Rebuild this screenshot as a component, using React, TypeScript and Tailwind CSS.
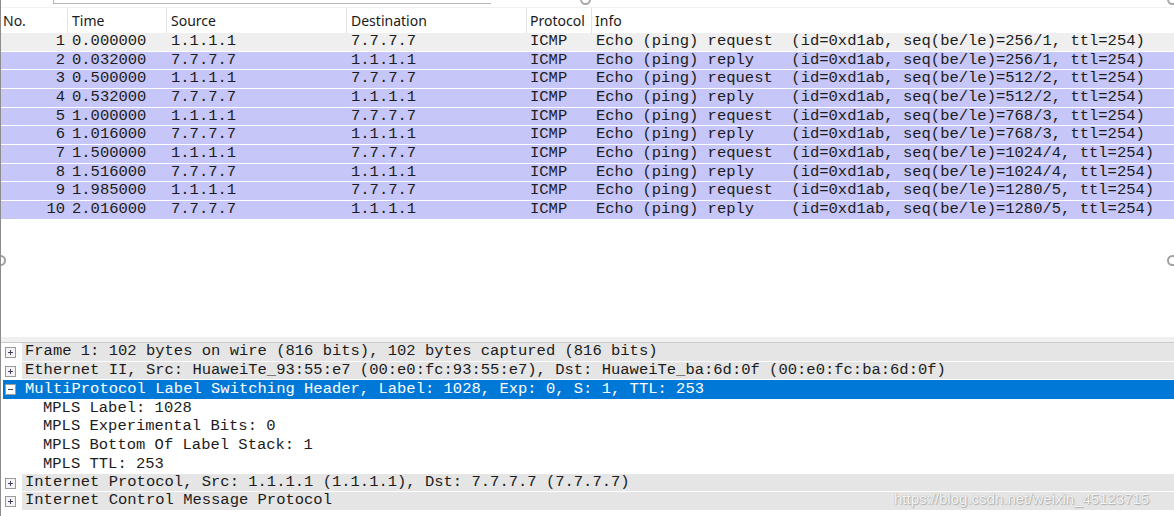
import React from "react";

const mono = { fontFamily: '"Liberation Mono", "DejaVu Sans Mono", monospace' };

type Pkt = [string, string, string, string, string, string];
const rows: Pkt[] = [
  ["1", "0.000000", "1.1.1.1", "7.7.7.7", "ICMP", "Echo (ping) request  (id=0xd1ab, seq(be/le)=256/1, ttl=254)"],
  ["2", "0.032000", "7.7.7.7", "1.1.1.1", "ICMP", "Echo (ping) reply    (id=0xd1ab, seq(be/le)=256/1, ttl=254)"],
  ["3", "0.500000", "1.1.1.1", "7.7.7.7", "ICMP", "Echo (ping) request  (id=0xd1ab, seq(be/le)=512/2, ttl=254)"],
  ["4", "0.532000", "7.7.7.7", "1.1.1.1", "ICMP", "Echo (ping) reply    (id=0xd1ab, seq(be/le)=512/2, ttl=254)"],
  ["5", "1.000000", "1.1.1.1", "7.7.7.7", "ICMP", "Echo (ping) request  (id=0xd1ab, seq(be/le)=768/3, ttl=254)"],
  ["6", "1.016000", "7.7.7.7", "1.1.1.1", "ICMP", "Echo (ping) reply    (id=0xd1ab, seq(be/le)=768/3, ttl=254)"],
  ["7", "1.500000", "1.1.1.1", "7.7.7.7", "ICMP", "Echo (ping) request  (id=0xd1ab, seq(be/le)=1024/4, ttl=254)"],
  ["8", "1.516000", "7.7.7.7", "1.1.1.1", "ICMP", "Echo (ping) reply    (id=0xd1ab, seq(be/le)=1024/4, ttl=254)"],
  ["9", "1.985000", "1.1.1.1", "7.7.7.7", "ICMP", "Echo (ping) request  (id=0xd1ab, seq(be/le)=1280/5, ttl=254)"],
  ["10", "2.016000", "7.7.7.7", "1.1.1.1", "ICMP", "Echo (ping) reply    (id=0xd1ab, seq(be/le)=1280/5, ttl=254)"],
];

function Box({ minus, selected }: { minus?: boolean; selected?: boolean }) {
  return (
    <svg width="11" height="11" viewBox="0 0 11 11" className="shrink-0">
      <rect x="0.5" y="0.5" width="10" height="10" fill={selected ? "#ffffff" : "#f4f4f4"} stroke="#9a9a9a" />
      <line x1="3" y1="5.5" x2="8" y2="5.5" stroke="#404060" strokeWidth="1" />
      {!minus && <line x1="5.5" y1="3" x2="5.5" y2="8" stroke="#404060" strokeWidth="1" />}
    </svg>
  );
}

function TreeRow({ text, selected }: { text: string; selected?: boolean }) {
  if (selected) {
    return (
      <div className="flex items-center h-[18.67px] bg-[#0078d7] text-white ml-[2px]">
        <div className="w-[19px] flex items-center pl-[2px]">
          <Box minus selected />
        </div>
        <div className="pl-[3px] whitespace-pre">{text}</div>
      </div>
    );
  }
  return (
    <div className="flex items-center h-[18.67px]">
      <div className="w-[21px] h-full flex items-center pl-[4px]">
        <Box />
      </div>
      <div className="flex-1 h-full flex items-center bg-[#e5e5e5] pl-[3px] whitespace-pre border-b border-white">{text}</div>
    </div>
  );
}

function ChildRow({ text }: { text: string }) {
  return <div className="h-[18.67px] flex items-center pl-[42px] whitespace-pre">{text}</div>;
}

export default function App() {
  return (
    <div className="relative w-[1174px] h-[516px] bg-white overflow-hidden flex flex-col border-l border-[#8c8c8c] text-[#1c1c1c]">
      {/* top strip */}
      <div className="h-[8px] flex items-start border-b border-[#f0f0f0]">
        <div className="ml-[52px] w-[438px] h-[4px] border-l border-b border-[#b4b4b4]" />
      </div>
      <div className="absolute left-[579px] top-[-6px] w-[11px] h-[11px] rounded-full border-2 border-[#a8a8a8]" />
      <div className="absolute left-[1166px] top-[-6px] w-[11px] h-[11px] rounded-full border-2 border-[#a8a8a8]" />

      {/* header */}
      <div className="flex h-[25px] text-[14px] text-[#1a1a1a]" style={{ fontFamily: '"Noto Sans", "Open Sans", sans-serif' }}>
        <div className="w-[67px] border-r border-[#e3e3e3] pl-[2px] flex items-center">No.</div>
        <div className="w-[99px] border-r border-[#e3e3e3] pl-[4px] flex items-center">Time</div>
        <div className="w-[180px] border-r border-[#e3e3e3] pl-[4px] flex items-center">Source</div>
        <div className="w-[180px] border-r border-[#e3e3e3] pl-[4px] flex items-center">Destination</div>
        <div className="w-[65px] border-r border-[#e3e3e3] pl-[3px] flex items-center">Protocol</div>
        <div className="flex-1 pl-[3px] flex items-center">Info</div>
      </div>

      {/* packet rows */}
      <div className="flex flex-col text-[15.5px] leading-none" style={mono}>
        {rows.map((r, i) => (
          <div
            key={r[0]}
            className={`flex items-center h-[18.67px] border-b border-white whitespace-pre ${i === 0 ? "bg-[#efefef]" : "bg-[#c6c6f8]"}`}
          >
            <div className="w-[67px] text-right pr-[3px]">{r[0]}</div>
            <div className="w-[99px] pl-[4px]">{r[1]}</div>
            <div className="w-[180px] pl-[4px]">{r[2]}</div>
            <div className="w-[180px] pl-[4px]">{r[3]}</div>
            <div className="w-[65px] pl-[3px]">{r[4]}</div>
            <div className="flex-1 pl-[4px]">{r[5]}</div>
          </div>
        ))}
      </div>

      <div className="flex-1" />
      <div className="absolute left-[-6px] top-[255px] w-[11px] h-[11px] rounded-full border-2 border-[#a0a0a0]" />
      <div className="absolute left-[1166px] top-[255px] w-[11px] h-[11px] rounded-full border-2 border-[#a0a0a0]" />

      {/* splitter */}
      <div className="h-[6px] bg-[#f0f0f0] border-b border-[#cacaca]" />

      {/* details */}
      <div className="flex flex-col text-[15.5px] leading-none pb-[5px]" style={mono}>
        <TreeRow text="Frame 1: 102 bytes on wire (816 bits), 102 bytes captured (816 bits)" />
        <TreeRow text="Ethernet II, Src: HuaweiTe_93:55:e7 (00:e0:fc:93:55:e7), Dst: HuaweiTe_ba:6d:0f (00:e0:fc:ba:6d:0f)" />
        <TreeRow selected text="MultiProtocol Label Switching Header, Label: 1028, Exp: 0, S: 1, TTL: 253" />
        <ChildRow text="MPLS Label: 1028" />
        <ChildRow text="MPLS Experimental Bits: 0" />
        <ChildRow text="MPLS Bottom Of Label Stack: 1" />
        <ChildRow text="MPLS TTL: 253" />
        <TreeRow text="Internet Protocol, Src: 1.1.1.1 (1.1.1.1), Dst: 7.7.7.7 (7.7.7.7)" />
        <TreeRow text="Internet Control Message Protocol" />
      </div>

      {/* watermark */}
      <div
        className="absolute left-[893px] top-[488px] text-[15px] text-white/90 whitespace-nowrap"
        style={{ fontFamily: '"Liberation Sans", Arial, sans-serif', textShadow: "0 0 1px #9a9a9a, 1px 1px 1px #b0b0b0" }}
      >
        https://blog.csdn.net/weixin_45123715
      </div>
    </div>
  );
}
